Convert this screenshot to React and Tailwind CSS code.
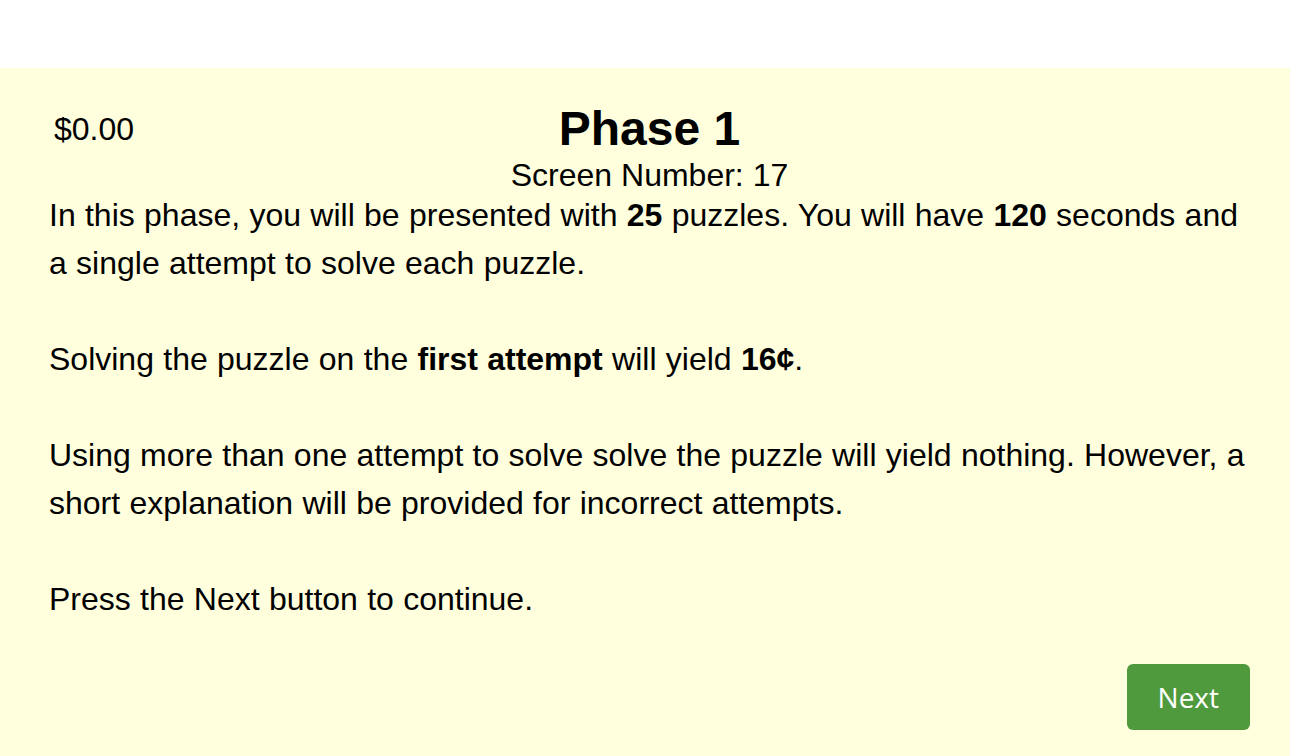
export default function App() {
  return (
    <div className="min-h-[756px] bg-white pt-[68px] pr-[10px]" style={{ fontFamily: '"Liberation Sans", Arial, sans-serif' }}>
      <div className="bg-[#ffffdd] text-black pt-[37px] pb-[40px] pl-[49px] pr-[36px] min-h-[688px]">
        <div className="grid grid-cols-[1fr_auto_1fr] items-start pr-[4px]">
          <div className="pl-[5px] text-[32px] leading-[48px]">$0.00</div>
          <div className="flex flex-col items-center">
            <h1 className="text-[48px] font-bold leading-[48px]">Phase 1</h1>
            <div className="text-[32px] leading-[37px] pt-[4px] -mb-[3px]">Screen Number: 17</div>
          </div>
          <div />
        </div>
        <div className="text-[32px] leading-[48px] flex flex-col gap-[48px] [word-spacing:0.4px]">
          <p>
            In this phase, you will be presented with <b>25</b> puzzles. You will have <b>120</b> seconds and a single attempt to solve each puzzle.
          </p>
          <p>
            Solving the puzzle on the <b>first attempt</b> will yield <b>16¢</b>.
          </p>
          <p>
            Using more than one attempt to solve solve the puzzle will yield nothing. However, a short explanation will be provided for incorrect attempts.
          </p>
          <p>Press the Next button to continue.</p>
        </div>
        <div className="flex justify-end mt-[41px] pr-[4px]">
          <button
            className="h-[66px] px-[31px] rounded-[6px] bg-[#4f9a3d] text-white text-[28px]"
            style={{ fontFamily: '"Open Sans", sans-serif' }}
          >
            Next
          </button>
        </div>
      </div>
    </div>
  );
}
